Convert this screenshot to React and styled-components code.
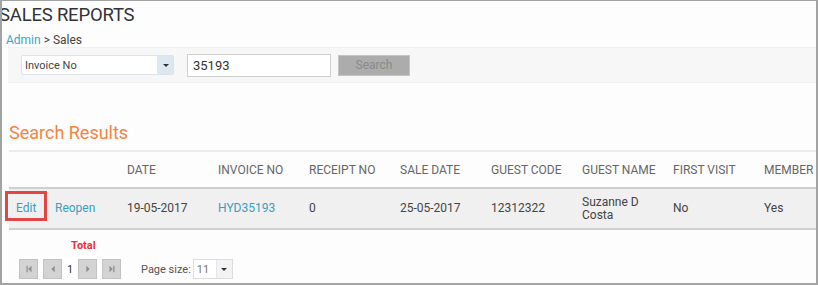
import React from 'react';
import styled, { createGlobalStyle } from 'styled-components';

const GlobalStyle = createGlobalStyle`
  html, body {
    margin: 0;
    padding: 0;
    background: #fff;
  }
  body {
    font-family: Roboto, "Liberation Sans", Arial, sans-serif;
    color: #333;
  }
`;

const Frame = styled.div`
  box-sizing: border-box;
  width: 818px;
  height: 285px;
  border: 1px solid #a3a3a3;
  border-left-width: 2px;
  border-right-width: 2px;
  border-bottom-width: 2px;
  background: #fdfdfd;
  overflow: hidden;
`;

const Title = styled.h1`
  margin: 0 0 0 -3px;
  padding-top: 4px;
  font-size: 18.5px;
  font-weight: 400;
  line-height: 20px;
  color: #333;
  letter-spacing: -0.2px;
`;

const Crumbs = styled.div`
  margin: 8px 0 0 4px;
  font-size: 12px;
  line-height: 14px;
  color: #444;
`;

const CrumbLink = styled.span`
  color: #3ba4c6;
`;

const FilterBar = styled.div`
  display: flex;
  align-items: center;
  gap: 13px;
  height: 34px;
  margin: 0 0 0 6px;
  padding-left: 13px;
  background: #f7f7f7;
  border-top: 1px solid #f0f0f0;
  border-bottom: 1px solid #f0f0f0;
`;

const Select = styled.div`
  box-sizing: border-box;
  display: flex;
  align-items: stretch;
  width: 153px;
  height: 20px;
  background: #fff;
  border: 1px solid #dde3ea;
  border-radius: 2px;
  font-size: 11px;
  color: #444;
`;

const SelectText = styled.span`
  flex: 1;
  display: flex;
  align-items: center;
  padding-left: 3px;
`;

const SelectArrow = styled.span`
  width: 15px;
  display: flex;
  align-items: center;
  justify-content: center;
  background: ${p => p.$bg || '#dde7f2'};
  border-left: 1px solid #e3e8ee;
  &::after {
    content: '';
    border-left: 3px solid transparent;
    border-right: 3px solid transparent;
    border-top: 3px solid #333;
  }
`;

const Input = styled.div`
  box-sizing: border-box;
  width: 144px;
  height: 23px;
  padding: 3px 5px;
  background: #fff;
  border: 1px solid #cfcfcf;
  font-size: 13px;
  color: #333;
`;

const Button = styled.div`
  box-sizing: border-box;
  width: 72px;
  height: 21px;
  display: flex;
  align-items: center;
  justify-content: center;
  background: #acacac;
  border: 1px solid #c4c4c4;
  font-size: 12px;
  color: #8a8a8a;
  margin-left: -6px;
`;

const Results = styled.h2`
  margin: 40px 0 0 7px;
  font-size: 18px;
  font-weight: 400;
  line-height: 20px;
  color: #f58443;
`;

const Table = styled.table`
  margin: 7px 0 0 7px;
  width: 809px;
  border-collapse: collapse;
  table-layout: fixed;
  font-size: 12px;
  border-top: 2px solid #ececec;
`;

const Th = styled.th`
  height: 35px;
  padding: 0 0 0 7px;
  text-align: left;
  font-weight: 400;
  color: #666;
  white-space: nowrap;
`;

const Row = styled.tr`
  background: #f0f0f0;
  border-top: 2px solid #cfcfcf;
  border-bottom: 2px solid #cfcfcf;
`;

const Td = styled.td`
  height: 39px;
  padding: 0 0 0 7px;
  line-height: 13px;
  color: ${p => (p.$link ? '#3a9ec4' : '#444')};
`;

const EditWrap = styled.span`
  position: relative;
  &::before {
    content: '';
    position: absolute;
    left: -11px;
    top: -10px;
    width: 36px;
    height: 24px;
    border: 3px solid #e24545;
  }
`;

const Total = styled.div`
  margin: 9px 0 0 69px;
  font-size: 11px;
  font-weight: 700;
  color: #f0323a;
`;

const Pager = styled.div`
  display: flex;
  align-items: center;
  margin: 7px 0 0 17px;
  gap: 5px;
  font-size: 11px;
  color: #555;
`;

const PageBtn = styled.span`
  box-sizing: border-box;
  width: 19px;
  height: 20px;
  display: flex;
  align-items: center;
  justify-content: center;
  background: #d3d3d3;
  border: 1px solid #c2c2c2;
`;

const PageNum = styled.span`
  box-sizing: border-box;
  width: 12px;
  height: 20px;
  margin: 0 -3px;
  display: flex;
  align-items: center;
  justify-content: center;
  background: #fff;
  font-size: 11px;
  color: #333;
`;

const SizeLabel = styled.span`
  margin-left: 15px;
  color: #555;
`;

const SizeSelect = styled.span`
  box-sizing: border-box;
  display: flex;
  width: 40px;
  height: 20px;
  margin-left: -3px;
  border: 1px solid #ddd;
  background: #fff;
  color: #777;
`;

const ArrowIcon = ({ dir }) => {
  const shapes = {
    first: 'M3 2h1.5v8H3zM9 2v8L5 6z',
    prev: 'M8 2v8L4 6z',
    next: 'M4 2v8l4-4z',
    last: 'M3 2v8l4-4zM7.5 2H9v8H7.5z',
  };
  return (
    <svg width="10" height="12" viewBox="0 0 12 12">
      <path d={shapes[dir]} fill="#8e8e8e" />
    </svg>
  );
};

const columns = ['', '', 'DATE', 'INVOICE NO', 'RECEIPT NO', 'SALE DATE', 'GUEST CODE', 'GUEST NAME', 'FIRST VISIT', 'MEMBER'];
const widths = [39, 72, 91, 91, 91, 91, 91, 91, 91, 61];

export default function App() {
  return (
    <>
      <GlobalStyle />
      <Frame>
        <Title>SALES REPORTS</Title>
        <Crumbs>
          <CrumbLink>Admin</CrumbLink> &gt; Sales
        </Crumbs>
        <FilterBar>
          <Select>
            <SelectText>Invoice No</SelectText>
            <SelectArrow />
          </Select>
          <Input>35193</Input>
          <Button>Search</Button>
        </FilterBar>

        <Results>Search Results</Results>
        <Table>
          <colgroup>
            {widths.map((w, i) => (
              <col key={i} style={{ width: w }} />
            ))}
          </colgroup>
          <thead>
            <tr>
              {columns.map((c, i) => (
                <Th key={i}>{c}</Th>
              ))}
            </tr>
          </thead>
          <tbody>
            <Row>
              <Td $link>
                <EditWrap>Edit</EditWrap>
              </Td>
              <Td $link>Reopen</Td>
              <Td>19-05-2017</Td>
              <Td $link>HYD35193</Td>
              <Td>0</Td>
              <Td>25-05-2017</Td>
              <Td>12312322</Td>
              <Td>
                Suzanne D
                <br />
                Costa
              </Td>
              <Td>No</Td>
              <Td>Yes</Td>
            </Row>
          </tbody>
        </Table>
        <Total>Total</Total>
        <Pager>
          <PageBtn><ArrowIcon dir="first" /></PageBtn>
          <PageBtn><ArrowIcon dir="prev" /></PageBtn>
          <PageNum>1</PageNum>
          <PageBtn><ArrowIcon dir="next" /></PageBtn>
          <PageBtn><ArrowIcon dir="last" /></PageBtn>
          <SizeLabel>Page size:</SizeLabel>
          <SizeSelect>
            <SelectText>11</SelectText>
            <SelectArrow $bg="#f3f3f3" />
          </SizeSelect>
        </Pager>
      </Frame>
    </>
  );
}
